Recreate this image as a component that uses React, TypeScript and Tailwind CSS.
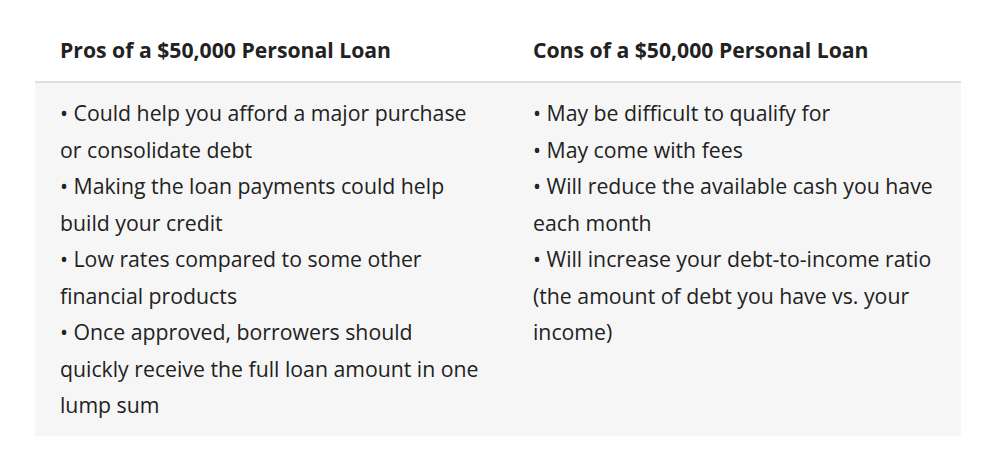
export default function App() {
  const pros = [
    "Could help you afford a major purchase or consolidate debt",
    "Making the loan payments could help build your credit",
    "Low rates compared to some other financial products",
    "Once approved, borrowers should quickly receive the full loan amount in one lump sum",
  ];
  const cons = [
    "May be difficult to qualify for",
    "May come with fees",
    "Will reduce the available cash you have each month",
    "Will increase your debt-to-income ratio (the amount of debt you have vs. your income)",
  ];
  return (
    <div className="w-[1000px] h-[469px] bg-white pt-[20px] pl-[35px]" style={{ fontFamily: '"Open Sans", sans-serif' }}>
      <div className="w-[926px] text-[#222]">
        <div className="grid grid-cols-[473px_453px] border-b-2 border-[#dedede]">
          <div className="pl-[25px] pt-[15px] pb-[16px] text-[21.2px] leading-[30px] font-bold whitespace-nowrap">Pros of a $50,000 Personal Loan</div>
          <div className="pl-[25px] pt-[15px] pb-[16px] text-[21.2px] leading-[30px] font-bold whitespace-nowrap">Cons of a $50,000 Personal Loan</div>
        </div>
        <div className="grid grid-cols-[473px_453px] bg-[#f6f6f6] pt-[12px] pb-[12px]">
          <div className="pl-[25px] pr-[25px] text-[21.25px] leading-[36.5px]">
            {pros.map((p) => (
              <div key={p}>• {p}</div>
            ))}
          </div>
          <div className="pl-[25px] pr-[25px] text-[21.25px] leading-[36.5px]">
            {cons.map((p) => (
              <div key={p}>• {p}</div>
            ))}
          </div>
        </div>
      </div>
    </div>
  );
}
